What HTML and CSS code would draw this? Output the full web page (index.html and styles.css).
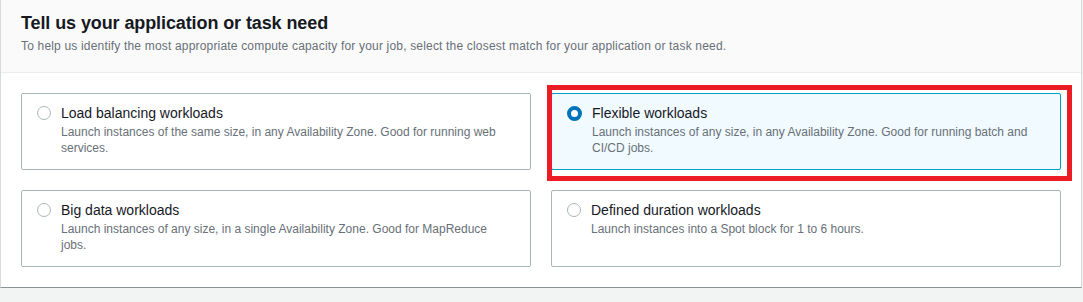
FILE: index.html
```html
<!DOCTYPE html>
<html lang="en">
<head>
  <meta charset="UTF-8">
  <title>Tell us your application or task need</title>
  <link rel="stylesheet" href="styles.css">
</head>
<body>
  <div class="panel">
    <div class="panel-header">
      <h2>Tell us your application or task need</h2>
      <p>To help us identify the most appropriate compute capacity for your job, select the closest match for your application or task need.</p>
    </div>
    <div class="panel-body">
      <div class="tiles">
        <label class="tile">
          <span class="radio"></span>
          <span class="tile-text">
            <span class="tile-title">Load balancing workloads</span>
            <span class="tile-desc">Launch instances of the same size, in any Availability Zone. Good for running web services.</span>
          </span>
        </label>
        <label class="tile selected">
          <span class="radio"></span>
          <span class="tile-text">
            <span class="tile-title">Flexible workloads</span>
            <span class="tile-desc">Launch instances of any size, in any Availability Zone. Good for running batch and CI/CD jobs.</span>
          </span>
        </label>
        <label class="tile">
          <span class="radio"></span>
          <span class="tile-text">
            <span class="tile-title">Big data workloads</span>
            <span class="tile-desc">Launch instances of any size, in a single Availability Zone. Good for MapReduce jobs.</span>
          </span>
        </label>
        <label class="tile">
          <span class="radio"></span>
          <span class="tile-text">
            <span class="tile-title">Defined duration workloads</span>
            <span class="tile-desc">Launch instances into a Spot block for 1 to 6 hours.</span>
          </span>
        </label>
      </div>
    </div>
    <!-- annotation box around the selected tile -->
    <div class="highlight"></div>
  </div>
</body>
</html>
```

FILE: styles.css
```css
body {
  margin: 0;
  background-color: #f2f3f3;
  font-family: 'Liberation Sans', Arial, sans-serif;
  color: #16191f;
}
.panel {
  position: relative;
  width: 1080px;
  background-color: white;
  border-left: 1px solid #d5dbdb;
  border-right: 1px solid #d5dbdb;
  border-bottom: 1px solid #879596;
}
.panel-header {
  background-color: #fafafa;
  padding: 12px 20px 18px;
  border-bottom: 1px solid #eaeded;
}
.panel-header h2 {
  margin: 0;
  font-size: 18px;
  line-height: 22px;
  font-weight: bold;
  letter-spacing: -0.1px;
}
.panel-header p {
  margin: 4px 0 0;
  font-size: 12px;
  line-height: 16px;
  letter-spacing: 0.18px;
  color: #687078;
}
.panel-body {
  padding: 20px;
}
.tiles {
  display: grid;
  grid-template-columns: 1fr 1fr;
  gap: 20px;
}
.tile {
  display: flex;
  align-items: flex-start;
  border: 1px solid #aab7b8;
  border-radius: 2px;
  padding: 8px 22px 13px 15px;
  min-height: 54px;
}
.tile.selected {
  background-color: #f1faff;
  border-color: #00a1c9;
}
.radio {
  flex: none;
  box-sizing: border-box;
  width: 14px;
  height: 14px;
  margin-top: 4px;
  margin-right: 10px;
  border: 1px solid #aab7b8;
  border-radius: 50%;
  background-color: white;
}
.tile.selected .radio {
  width: 15px;
  height: 15px;
  margin-top: 4px;
  border: 4.5px solid #0073bb;
}
.tile-text {
  display: flex;
  flex-direction: column;
}
.tile-title {
  font-size: 14px;
  line-height: 22px;
}
.tile-desc {
  font-size: 12px;
  line-height: 16px;
  color: #687078;
}
.highlight {
  position: absolute;
  left: 546px;
  top: 85px;
  width: 515px;
  height: 86px;
  border: 5px solid #ec1c24;
}
```
